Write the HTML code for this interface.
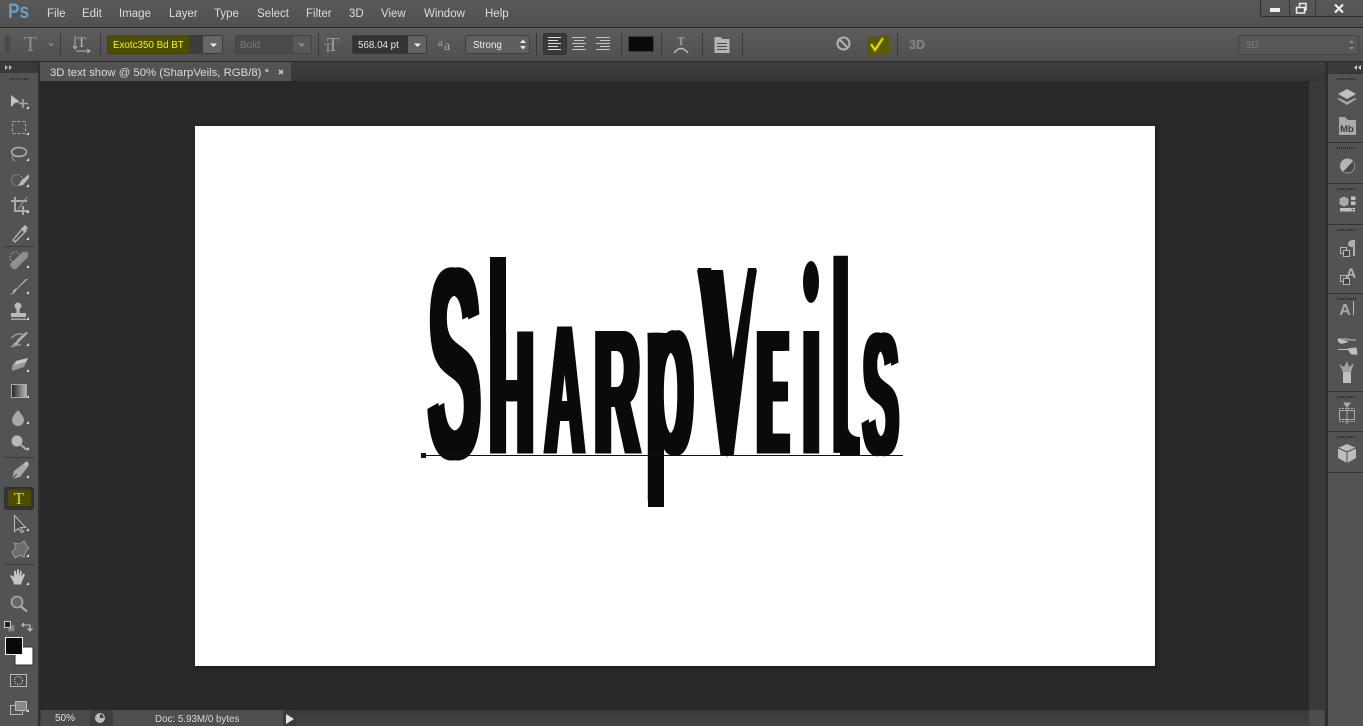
<!DOCTYPE html>
<html><head><meta charset="utf-8"><style>
html,body{margin:0;padding:0;width:1363px;height:726px;overflow:hidden;background:#282828}
#root{position:relative;width:1363px;height:726px;overflow:hidden;font-family:"Liberation Sans",sans-serif}
.b{position:absolute}
.g{position:absolute;top:370.35px;font:700 100px/100px "Liberation Sans",sans-serif;color:#0a0a0a;transform-origin:0 84.65px;white-space:pre}
svg text{font-family:"Liberation Sans",sans-serif}
</style></head><body><div id="root">
<div class="b" style="left:0;top:0;width:1363px;height:27px;background:linear-gradient(#585858,#515151)"></div>
<div class="b" style="left:0;top:27px;width:1363px;height:1px;background:#2a2a2a"></div>
<div class="b" style="left:0;top:28px;width:1363px;height:33px;background:linear-gradient(#5c5c5c,#505050)"></div>
<div class="b" style="left:0;top:61px;width:1363px;height:1px;background:#2a2a2a"></div>
<div class="b" style="left:40px;top:62px;width:1287px;height:19px;background:linear-gradient(#3f3f3f,#353535)"></div>
<div class="b" style="left:40px;top:62px;width:251px;height:19px;background:#535353"></div>
<div class="b" style="left:0;top:62px;width:38px;height:664px;background:#535353"></div>
<div class="b" style="left:0;top:62px;width:38px;height:11px;background:#393939"></div>
<div class="b" style="left:38px;top:62px;width:2px;height:664px;background:#303030"></div>
<div class="b" style="left:40px;top:81px;width:1269px;height:629px;background:#292929"></div>
<div class="b" style="left:1309px;top:81px;width:16px;height:629px;background:#393939"></div>
<div class="b" style="left:40px;top:710px;width:1269px;height:16px;background:linear-gradient(#383838,#444)"></div>
<div class="b" style="left:1309px;top:710px;width:16px;height:16px;background:#4c4c4c"></div>
<div class="b" style="left:1325px;top:62px;width:3px;height:664px;background:#2e2e2e"></div>
<div class="b" style="left:1328px;top:62px;width:35px;height:664px;background:#535353"></div>
<div class="b" style="left:1328px;top:62px;width:35px;height:11px;background:#393939"></div>
<div class="b" style="left:41px;top:710px;width:49px;height:16px;background:#4a4a4a"></div>
<div class="b" style="left:90px;top:710px;width:23px;height:16px;background:#3f3f3f"></div>
<div class="b" style="left:113px;top:710px;width:170px;height:16px;background:#4f4f4f"></div>
<div class="b" style="left:283px;top:710px;width:13px;height:16px;background:#3a3a3a"></div>
<div class="b" style="left:195px;top:126px;width:960px;height:540px;background:#fff;box-shadow:2px 2px 3px #1c1c1c"></div>

<div class="g" style="left:425px;top:375.35px;transform:scale(.795,2.73);text-shadow:7.4px 0 0 #0a0a0a">S</div>
<div class="g" style="left:485.9px;transform:scale(.611,1.773);text-shadow:11.8px 0 0 #0a0a0a">H</div>
<div class="g" style="left:542px;transform:scale(.55,1.846);text-shadow:5px 0 0 #0a0a0a,10px 0 0 #0a0a0a">A</div>
<div class="g" style="left:590.8px;transform:scale(.626,1.78);text-shadow:5.6px 0 0 #0a0a0a,11.2px 0 0 #0a0a0a">R</div>
<div class="g" style="left:641.5px;transform:scale(.827,2.28);text-shadow:5.9px 0 0 #0a0a0a">p</div>
<div class="g" style="left:697px;top:373.35px;transform:scale(.9,2.73)">V</div>
<div class="g" style="left:754.2px;transform:scale(.416,1.78);text-shadow:12px 0 0 #0a0a0a,24px 0 0 #0a0a0a">E</div>
<div class="g" style="left:795.6px;transform:scale(1.1,1.78)">I</div>
<div class="g" style="left:826.2px;transform:scale(1.06,2.72)">l</div>
<div class="g" style="left:860px;top:371.35px;transform:scale(.52,1.75);text-shadow:13px 0 0 #0a0a0a">S</div>

<svg class="b" style="left:0;top:0" width="1363" height="726" viewBox="0 0 1363 726">
<!-- canvas additions -->
<rect x="490" y="257" width="16" height="80" fill="#0a0a0a"/>
<rect x="648" y="333" width="24" height="12" fill="#0a0a0a"/>
<rect x="648" y="455" width="16" height="52" fill="#0a0a0a"/>
<ellipse cx="811" cy="282" rx="8" ry="21" fill="#0a0a0a"/>
<path d="M847 420Q847 437 860 437V455H840V420Z" fill="#0a0a0a"/>
<polygon points="723,268 732,368 748,268" fill="#fff"/>
<polygon points="697,270 723,270 734,370 727,458" fill="#0a0a0a"/>
<polygon points="757,270 748,270 731,370 727,458" fill="#0a0a0a"/>
<rect x="424" y="455" width="479" height="1" fill="#111"/>
<rect x="421" y="453" width="5" height="5" fill="#111"/>

<!-- top bar -->
<text x="8" y="18" font-size="21" font-weight="700" fill="#6d9bc6" textLength="21" lengthAdjust="spacingAndGlyphs">Ps</text>
<g font-size="11.5" fill="#dedede">
<text x="47" y="17">File</text><text x="82" y="17">Edit</text><text x="119" y="17">Image</text><text x="169" y="17">Layer</text><text x="214" y="17">Type</text><text x="257" y="17">Select</text><text x="306" y="17">Filter</text><text x="349" y="17">3D</text><text x="381" y="17">View</text><text x="424" y="17">Window</text><text x="485" y="17">Help</text>
</g>
<path d="M1260.5 0V14q0 2.5 2.5 2.5H1363" fill="none" stroke="#2e2e2e"/>
<path d="M1289.5 0V16M1315.5 0V16" stroke="#3a3a3a"/>
<rect x="1270" y="8" width="10" height="4" fill="#eee"/>
<path d="M1296.5 7.5h8v5.500h-8zM1299.500 7V3.500h6.500V10h-2" fill="none" stroke="#eee" stroke-width="1.500"/>
<path d="M1335 4.500L1343 12.500M1343 4.500L1335 12.500" stroke="#eee" stroke-width="2.200"/>

<!-- options bar -->
<path d="M5 36h5M5 38h5M5 40h5M5 42h5M5 44h5M5 46h5M5 48h5M5 50h5M5 52h5" stroke="#3e3e3e"/>
<text x="24" y="51" font-size="21" fill="#8c8c8c" style="font-family:'Liberation Serif',serif">T</text>
<path d="M48 43.500h6l-3 3z" fill="#888"/>
<path d="M60.500 33v23M100.500 33v23M318.500 33v23M536.500 33v23M621.500 33v23M661.500 33v23M702.500 33v23M742.500 33v23M897.500 33v23" stroke="#3a3a3a"/>
<text x="77" y="47" font-size="15" fill="#b5b5b5" style="font-family:'Liberation Serif',serif">T</text>
<path d="M75 36v12M73 46l2 3 2-3M76 51h13M87 49l3 2-3 2" stroke="#b5b5b5" fill="none"/>

<rect x="107.500" y="35.500" width="115" height="18" rx="1.500" fill="#3d3d3d" stroke="#3a3a3a"/>
<rect x="108" y="35" width="81" height="18" fill="#4d4d00"/>
<text x="113" y="48" font-size="9.800" fill="#f4f400">Exotc350 Bd BT</text>
<rect x="203" y="36" width="19" height="17" fill="#666"/>
<path d="M210 43.500h7l-3.500 3.500z" fill="#eee"/>

<rect x="235.500" y="35.500" width="76" height="18" rx="1.500" fill="#4a4a4a" stroke="#444"/>
<text x="240" y="48" font-size="10" fill="#7b7b7b">Bold</text>
<rect x="293" y="36" width="18" height="17" fill="#585858"/>
<path d="M298 43.500h7l-3.500 3.500z" fill="#888"/>

<text x="333" y="51" font-size="20" fill="#9c9c9c" style="font-family:'Liberation Serif',serif" text-anchor="middle">T</text>
<text x="328" y="52" font-size="13" fill="#9c9c9c" style="font-family:'Liberation Serif',serif" text-anchor="middle">T</text>

<rect x="352.500" y="35.500" width="74" height="18" rx="1.500" fill="#333" stroke="#3a3a3a"/>
<text x="358" y="48" font-size="9.800" fill="#e8e8e8">568.04 pt</text>
<rect x="408" y="36" width="18" height="17" fill="#626262"/>
<path d="M414 43.500h7l-3.500 3.500z" fill="#eee"/>

<text x="438" y="46" font-size="11" fill="#a8a8a8" style="font-family:'Liberation Serif',serif">a</text>
<text x="444" y="50" font-size="14" fill="#a8a8a8" style="font-family:'Liberation Serif',serif">a</text>

<rect x="465.500" y="35.500" width="64" height="18" rx="2" fill="#5f5f5f" stroke="#3e3e3e"/>
<text x="473" y="48" font-size="9.800" fill="#eee">Strong</text>
<path d="M520 43l3-3.500 3 3.500zM520 46l3 3.500 3-3.500z" fill="#e6e6e6"/>

<rect x="543.500" y="33.500" width="23" height="21" rx="2" fill="#3a3a3a" stroke="#333"/>
<path d="M548 37.500h13M548 40.500h10M548 43.500h13M548 46.500h10M548 49.500h13" stroke="#ddd"/>
<path d="M572 37.500h14M574 40.500h10M572 43.500h14M574 46.500h10M572 49.500h14" stroke="#c4c4c4"/>
<path d="M596 37.500h14M600 40.500h10M596 43.500h14M600 46.500h10M596 49.500h14" stroke="#c4c4c4"/>

<rect x="628.500" y="36.500" width="25" height="15" fill="#0a0a0a" stroke="#3a3a3a"/>

<text x="681" y="45" font-size="12" fill="#b8b8b8" text-anchor="middle" style="font-family:'Liberation Serif',serif">T</text>
<path d="M674 53q7-9 14 0" fill="none" stroke="#c0c0c0" stroke-width="1.400"/>

<path d="M714.500 37h6l2 2h7v14h-15z" fill="#b4b4b4"/>
<path d="M717 43.500h10M717 46.500h10M717 49.500h10" stroke="#4a4a4a"/>

<circle cx="843.500" cy="43.500" r="6" fill="none" stroke="#b0b0b0" stroke-width="2"/>
<path d="M839.500 39.500l8 8" stroke="#b0b0b0" stroke-width="2"/>
<path d="M867 37.500l22-2.500v19l-22 1.500z" fill="#5a5a00"/>
<path d="M871 44l4 6 8-12" fill="none" stroke="#d8d800" stroke-width="2.400"/>
<text x="909" y="49" font-size="13" font-weight="700" fill="#888" textLength="16" lengthAdjust="spacingAndGlyphs">3D</text>

<rect x="1238.500" y="35.500" width="120" height="19" rx="2" fill="#575757" stroke="#464646"/>
<text x="1246" y="48" font-size="9.800" fill="#7d7d7d">3D</text>
<path d="M1349 43l2.500-3 2.500 3zM1349 47l2.500 3 2.500-3z" fill="#8a8a8a"/>

<!-- tab bar -->
<text x="50" y="76" font-size="10.800" fill="#dcdcdc" textLength="219" lengthAdjust="spacingAndGlyphs">3D text show @ 50% (SharpVeils, RGB/8) *</text>
<path d="M279 70l4 4M283 70l-4 4" stroke="#ccc" stroke-width="1.500"/>
<path d="M5 65l3 2.500-3 2.500zM9 65l3 2.500-3 2.500z" fill="#bbb"/>
<path d="M1357 65l-3 2.500 3 2.500zM1361 65l-3 2.500 3 2.500z" fill="#ccc"/>
<path d="M10 79h19" stroke="#333" stroke-width="2" stroke-dasharray="1 1"/>

<!-- corner marks -->
<g fill="#ddd">
<path d="M26 109h3v-3zM26 135h3v-3zM26 161h3v-3zM26 187h3v-3zM26 213h3v-3zM26 240h3v-3zM26 268h3v-3zM26 294h3v-3zM26 320h3v-3zM26 346h3v-3zM26 372h3v-3zM26 398h3v-3zM26 424h3v-3zM26 450h3v-3zM26 478h3v-3zM26 504h3v-3zM26 531h3v-3zM26 557h3v-3zM26 585h3v-3zM26 712h3v-3z"/>
</g>
<path d="M5 246.500h29M5 457.500h29M5 564.500h29" stroke="#3a3a3a"/>

<!-- tools -->
<path d="M11 95l9 7-5 1-4 4z" fill="#c4c4c4"/><path d="M23 99v9M19 103.500h9" stroke="#aaa" stroke-width="1.500"/>
<rect x="12.500" y="121.500" width="13" height="12" fill="none" stroke="#aaa" stroke-dasharray="3 2"/>
<ellipse cx="19" cy="152" rx="7.500" ry="4.500" fill="none" stroke="#b0b0b0" stroke-width="1.500"/><path d="M13 155q-2 3 2 6" fill="none" stroke="#999"/>
<circle cx="17" cy="180" r="5.500" fill="none" stroke="#aaa" stroke-dasharray="1.500 1.500"/><path d="M29 174l-8 7-3 5 5-1 6-7z" fill="#b8b8b8"/>
<path d="M11 201h16M15 197v14h13M23 206v9" stroke="#aaa" stroke-width="2" fill="none"/><path d="M18 209l9-12" stroke="#999"/>
<path d="M13 240l10-12 3 3-11 11z" fill="none" stroke="#bbb" stroke-width="1.300"/><path d="M21 229l4-4 3 3-4 4z" fill="#bbb"/>
<path d="M27 258l-12 12q-3 1-5-2t1-5l11-10q4-1 5 1z" fill="#8e8e8e" transform="translate(1 -1)"/><circle cx="15" cy="257" r="5" fill="none" stroke="#aaa" stroke-dasharray="1.500 1.500"/>
<path d="M28 279l-11 10-2 3q-2 3-5 2l3-1q0-4 4-5l9-9z" fill="#bbb"/>
<circle cx="18" cy="306" r="3.500" fill="#bbb"/><rect x="16.500" y="308" width="3" height="7" fill="#bbb"/><rect x="11" y="313" width="15" height="4" fill="#bbb"/><rect x="11" y="318.500" width="15" height="1.500" fill="#aaa"/>
<path d="M28 333l-9 9-2 4-5 1 2-4q3-1 3-3l9-8z" fill="#b0b0b0"/><path d="M11 338l6-4h6M11 347q5-3 10-2" fill="none" stroke="#999" stroke-width="1.500"/>
<path d="M16 361l12-3-4 9-12 4q-1-6 4-10z" fill="#999"/><path d="M16 361l12-3-2 4-11 3z" fill="#c8c8c8"/>
<defs><linearGradient id="gr"><stop offset="0" stop-color="#222"/><stop offset="1" stop-color="#bbb"/></linearGradient></defs>
<rect x="11.500" y="384.500" width="15" height="13" fill="url(#gr)" stroke="#aaa"/>
<path d="M18 410q6 7 6 10a6 6 0 0 1-12 0q0-3 6-10z" fill="#a8a8a8"/>
<circle cx="17" cy="441" r="5.500" fill="#b8b8b8"/><path d="M21 445l6 5" stroke="#b0b0b0" stroke-width="2"/>
<path d="M12 479l2-8 9-7 4 4-7 9z" fill="#a8a8a8"/><path d="M23 464l4-3 2 3-2 4" fill="#bbb"/><path d="M12 479l5-5" stroke="#444"/>
<rect x="4.500" y="487.500" width="29" height="22" rx="2.500" fill="#353535" stroke="#2e2e2e"/>
<rect x="8" y="490" width="23" height="16" fill="#4d4d00"/>
<text x="19" y="504" font-size="17" fill="#d8d800" text-anchor="middle" style="font-family:'Liberation Serif',serif">T</text>
<path d="M14.500 515.500v16l4-3 3 4 2-1-3-4 5 0z" fill="#4c4c4c" stroke="#b8b8b8" stroke-width="1.100"/>
<path d="M12 552l4-4-2-5 6 1 4-3 2 4 3 3-3 3-2 6-4-2-5 3z" fill="#6c6c6c" stroke="#999" stroke-width="1"/>
<path d="M13 581l-3-5 1-1 3 2v-6l1.500-.5 1.500 5v-6h2v6l1.500-5 1.500 1-1 5 2.500-3 1.500 1-3 7-1 3h-7z" fill="#c4c4c4"/>
<circle cx="17" cy="602" r="5.500" fill="#666" stroke="#aaa" stroke-width="1.600"/><path d="M21 606.500l6 5" stroke="#aaa" stroke-width="2.200"/>

<rect x="8.500" y="625.500" width="5.500" height="5.500" fill="#8a8a8a" stroke="#777"/><rect x="4.500" y="621.500" width="6" height="6" fill="#222" stroke="#ccc"/>
<path d="M24 623l-2 2 2 2M22 625h8v5M27.500 628l2.500 3 2.500-3" fill="none" stroke="#c4c4c4" stroke-width="1.100"/>
<rect x="15" y="647" width="18" height="18" fill="#fff" stroke="#2e2e2e"/>
<rect x="5.500" y="637.500" width="17" height="17" fill="#0a0a0a" stroke="#eee"/>
<rect x="10.500" y="674.500" width="16" height="12" fill="#4a4a4a" stroke="#bbb"/>
<circle cx="18.500" cy="680.500" r="4" fill="none" stroke="#ddd" stroke-dasharray="1 1.200"/>
<rect x="10.500" y="705.500" width="12" height="9" fill="#555" stroke="#bbb"/>
<rect x="15.500" y="701.500" width="11" height="9" fill="#888" stroke="#bbb"/>

<!-- right dock -->
<g stroke="#333"><path d="M1328 73.500h35M1328 142.500h35M1328 183.500h35M1328 224.500h35M1328 293.500h35M1328 391.500h35M1328 431.500h35M1328 472.500h35"/></g>
<g stroke="#2e2e2e" stroke-width="2" stroke-dasharray="1 1"><path d="M1337 79h19M1337 148h19M1337 189h19M1337 230h19M1337 299h19M1337 397h19M1337 437h19"/></g>
<path d="M1347 89l9 5-9 5-9-5z" fill="#c0c0c0"/><path d="M1339 98l8 4 8-4 1.500 1-9.500 6-9.500-6z" fill="#aaa"/>
<path d="M1339 117v18h17v-15h-8l-3-3z" fill="#aaa"/>
<text x="1347" y="132" font-size="9.500" fill="#3c3c3c" text-anchor="middle" font-weight="700">Mb</text>
<circle cx="1347.500" cy="166" r="7.500" fill="#b4b4b4"/><path d="M1343 172l10-11q3 5 0 9t-10 2z" fill="#4a4a4a"/>
<path d="M1340 199l4-2 4 2v5l-4 2-4-2z" fill="#a8a8a8" stroke="#ccc" stroke-width=".6"/><rect x="1351" y="196.500" width="4.500" height="3.500" fill="#c0c0c0"/><rect x="1351" y="201.500" width="4.500" height="3.500" fill="#c0c0c0"/>
<rect x="1340" y="208" width="15" height="3.500" fill="#c0c0c0"/><path d="M1351 209h3l-1.500 1.500z" fill="#333"/>
<path d="M1352 240h3v16h-2v-9q-5 0-5-3t4-4z" fill="#b0b0b0"/>
<rect x="1340.500" y="247.500" width="6" height="6" fill="none" stroke="#b4b4b4"/><rect x="1343.500" y="250.500" width="6" height="6" fill="#444" stroke="#b4b4b4"/>
<text x="1351" y="278" font-size="14" font-weight="700" fill="#b4b4b4" text-anchor="middle">A</text>
<rect x="1340.500" y="275.500" width="6" height="6" fill="none" stroke="#b4b4b4"/><rect x="1343.500" y="278.500" width="6" height="6" fill="#444" stroke="#b4b4b4"/>
<text x="1345" y="315" font-size="16" font-weight="700" fill="#a8a8a8" text-anchor="middle">A</text><path d="M1353.500 301v14" stroke="#bbb"/>
<path d="M1338 339h8q3 0 4 1h6M1338 339q1 5 5 4t5-2" fill="#c0c0c0" stroke="#c0c0c0"/><path d="M1338 349.500h10M1348 349q5-1 8-1l1 6q-6 1-7-2z" fill="#c0c0c0" stroke="#c0c0c0"/>
<rect x="1343" y="372" width="8" height="11" fill="#c0c0c0"/><path d="M1343 372l-4-8 5 3 3-6 2 6 5-4-3 9z" fill="#a0a0a0"/>
<rect x="1339.500" y="410.500" width="15" height="9" fill="none" stroke="#aaa"/><path d="M1339 408.500h16M1339 421.500h16M1347 410v9" stroke="#aaa" stroke-dasharray="2 1"/><path d="M1344 403h6l-3 4zM1347 407v17" fill="#aaa" stroke="#aaa"/>
<path d="M1347 444l9 4v10l-9 5-9-5v-10z" fill="#bdbdbd"/><path d="M1338 448l9 4 9-4M1347 452v11" fill="none" stroke="#4a4a4a"/>

<!-- status bar -->
<text x="55" y="721" font-size="10" fill="#e0e0e0">50%</text>
<circle cx="100" cy="718" r="5" fill="#b8b8b8"/><path d="M100 718v-3.500h1.500a3.500 3.500 0 0 1 2 3.500z" fill="#3a3a3a"/>
<text x="155" y="722" font-size="9.800" fill="#d8d8d8">Doc: 5.93M/0 bytes</text>
<path d="M286 714l8 5-8 5z" fill="#e4e4e4"/>
</svg>
</div></body></html>
